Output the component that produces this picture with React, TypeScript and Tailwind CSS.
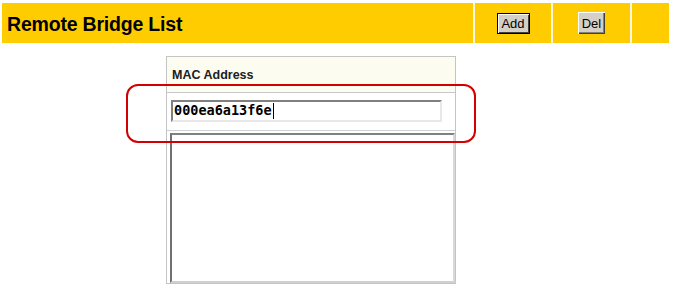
import React from "react";

export default function App() {
  return (
    <div className="relative w-[673px] h-[294px] bg-white overflow-hidden" style={{ fontFamily: '"Liberation Sans", Arial, sans-serif' }}>
      {/* Header bar */}
      <div className="ml-[2px] mt-[3px] flex h-[40px] w-[667px] gap-[2px] bg-[#fff8e0]">
        <div className="flex w-[471px] items-center bg-[#ffcc00] pl-[5px] pt-[3px]">
          <span className="text-[19.5px] font-bold leading-none tracking-[-0.2px] text-black">Remote Bridge List</span>
        </div>
        <div className="flex w-[76px] items-center justify-center bg-[#ffcc00]">
          <button className="h-[21px] w-[33px] border border-black bg-[#d4d0c8] p-0 text-[13px] leading-none text-black shadow-[inset_1px_1px_0_#ffffff,inset_-1px_-1px_0_#404040]">
            Add
          </button>
        </div>
        <div className="flex w-[77px] items-center justify-center bg-[#ffcc00]">
          <button className="h-[22px] w-[27px] border-0 bg-[#d4d0c8] p-0 text-[13px] leading-none text-black shadow-[inset_1px_1px_0_#ffffff,inset_-1px_-1px_0_#404040,inset_-2px_-2px_0_#808080]">
            Del
          </button>
        </div>
        <div className="w-[37px] bg-[#ffcc00]" />
      </div>

      {/* Panel */}
      <div className="ml-[166px] mt-[13px] flex h-[228px] w-[290px] flex-col border border-[#c4c4c4] bg-white">
        <div className="flex h-[36px] items-center border-b border-[#c8c8c8] bg-[#fcfcf0] pl-[5px] pt-[2px]">
          <span className="text-[12.5px] font-bold text-[#202020]">MAC Address</span>
        </div>
        <div className="flex h-[38px] items-start border-b border-[#d0d0d0] pl-[4px] pt-[7px]">
          <div className="flex h-[22px] w-[271px] items-center border-2 border-t-[#808080] border-l-[#808080] border-r-[#e8e8e8] border-b-[#e8e8e8] bg-white pl-[1px]">
            <span className="text-[13.5px] font-bold leading-none text-black" style={{ fontFamily: '"DejaVu Sans Mono", "Liberation Mono", monospace' }}>
              000ea6a13f6e
            </span>
            <span className="ml-[1px] h-[16px] w-[1px] bg-black" />
          </div>
        </div>
        <div className="ml-[3px] mt-[2px] flex-1 border-2 border-t-[#808080] border-l-[#707070] border-r-[#d8d8d8] border-b-[#d0d0d0] bg-white" />
      </div>

      {/* Red annotation */}
      <div className="absolute left-[126px] top-[84px] h-[59px] w-[350px] rounded-[12px] border-[2.5px] border-[#d40000]" />
    </div>
  );
}
